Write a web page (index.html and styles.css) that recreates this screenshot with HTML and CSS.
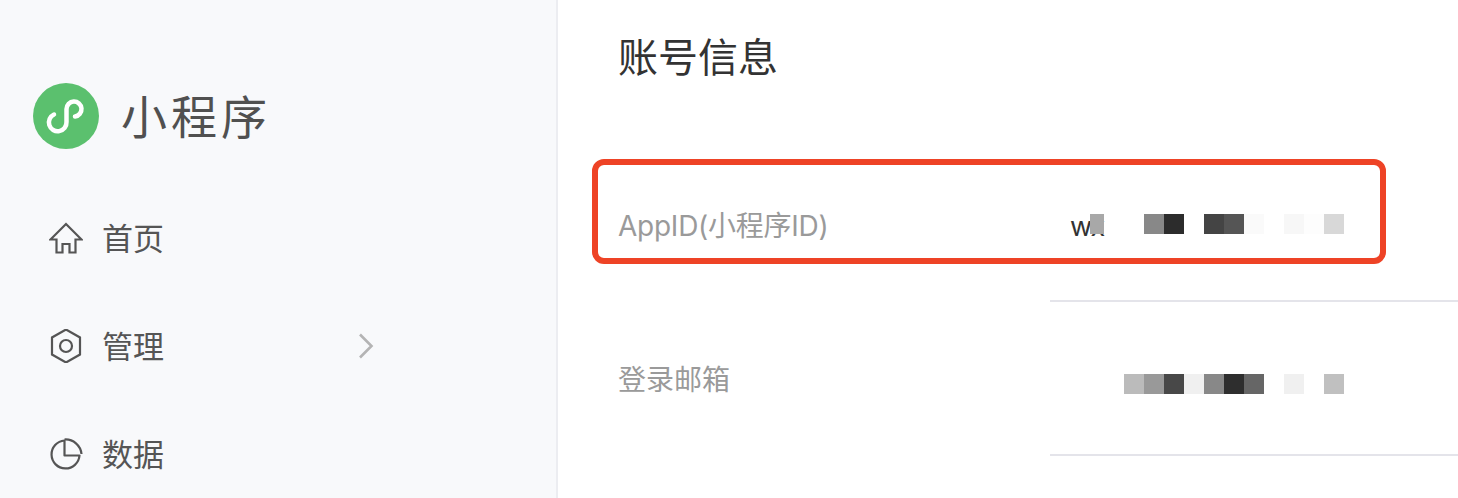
FILE: index.html
```html
<!DOCTYPE html>
<html lang="zh-CN">
<head>
  <meta charset="UTF-8" />
  <meta name="viewport" content="width=device-width, initial-scale=1.0"/>
  <title>账号信息</title>
  <link rel="stylesheet" href="styles.css">
</head>
<body>
  <div class="page">
    <aside class="sidebar">
      <div class="logo">
        <svg class="logo-mark" viewBox="0 0 66 66" width="66" height="66">
          <circle cx="33" cy="33" r="33" fill="#5bc06e"/>
          <path d="M42 33.500A7.500 7.500 0 1 0 33.500 26V39A8.800 8.800 0 1 1 21 31.500" fill="none" stroke="#fff" stroke-width="4.500" stroke-linecap="round"/>
        </svg>
        <span class="logo-text">小程序</span>
      </div>
      <nav class="nav">
        <a class="nav-item">
          <svg class="nav-icon" viewBox="0 0 34 34" width="34" height="34">
            <path d="M1.500 18.500L17 3L32.500 18.500H26.500V31.500H20.500V23H13.500V31.500H7.500V18.500Z" fill="none" stroke="#555" stroke-width="2.200" stroke-linejoin="miter"/>
          </svg>
          <span class="nav-label">首页</span>
        </a>
        <a class="nav-item">
          <svg class="nav-icon" viewBox="0 0 34 34" width="34" height="34">
            <path d="M17 0.500L31 8.500V25.500L17 33.500L3 25.500V8.500Z" fill="none" stroke="#555" stroke-width="2.200"/>
            <circle cx="17" cy="17" r="6" fill="none" stroke="#555" stroke-width="2.200"/>
          </svg>
          <span class="nav-label">管理</span>
          <svg class="nav-arrow" viewBox="0 0 16 26" width="16" height="26">
            <path d="M2 1.500L13.500 13L2 24.500" fill="none" stroke="#b4b4b4" stroke-width="2.600"/>
          </svg>
        </a>
        <a class="nav-item">
          <svg class="nav-icon" viewBox="0 0 34 34" width="34" height="34">
            <path d="M15.500 3.500A14 14 0 1 0 30.500 18.500H15.500Z" fill="none" stroke="#555" stroke-width="2.200" stroke-linejoin="round"/>
            <path d="M15.500 2.500A16 16 0 0 1 32.500 17" fill="none" stroke="#555" stroke-width="2.200"/>
          </svg>
          <span class="nav-label">数据</span>
        </a>
      </nav>
    </aside>

    <main class="main">
      <h1 class="title">账号信息</h1>

      <div class="info-row">
        <div class="info-label">AppID(小程序ID)</div>
        <div class="info-value info-value-first">
          <span class="appid-prefix">wx</span>
          <i class="tile tile-narrow s-a8"></i>
          <i class="tile gap"></i>
          <i class="tile gap"></i>
          <i class="tile s-88"></i>
          <i class="tile s-2c"></i>
          <i class="tile gap"></i>
          <i class="tile s-44"></i>
          <i class="tile s-55"></i>
          <i class="tile s-fa"></i>
          <i class="tile gap"></i>
          <i class="tile s-f7"></i>
          <i class="tile s-fd"></i>
          <i class="tile s-d8"></i>
        </div>
      </div>

      <div class="info-row">
        <div class="info-label info-label-second">登录邮箱</div>
        <div class="info-value info-value-second">
          <i class="tile s-bb"></i>
          <i class="tile s-99"></i>
          <i class="tile s-48"></i>
          <i class="tile s-f0"></i>
          <i class="tile s-88"></i>
          <i class="tile s-2e"></i>
          <i class="tile s-66"></i>
          <i class="tile gap"></i>
          <i class="tile s-f0"></i>
          <i class="tile gap"></i>
          <i class="tile s-c0"></i>
        </div>
      </div>

      <div class="highlight"></div>
    </main>
  </div>
</body>
</html>
```

FILE: styles.css
```css
html, body {
  margin: 0;
  height: 100%;
  overflow: hidden;
}

body {
  font-family: "Noto Sans CJK SC", "Inter", sans-serif;
  background-color: #ffffff;
  color: #333333;
}

.page {
  display: flex;
  height: 498px;
}

/* sidebar */
.sidebar {
  box-sizing: border-box;
  width: 558px;
  flex-shrink: 0;
  padding: 83px 0 0 33px;
  background-color: #f8f9fb;
  border-right: 2px solid #ecedf1;
}

.logo {
  display: flex;
  align-items: center;
  gap: 22px;
  height: 66px;
}

.logo-text {
  font-size: 46px;
  letter-spacing: 4px;
  color: #505050;
  padding-bottom: 4px;
}

.nav {
  margin-top: 35px;
  padding-left: 16px;
}

.nav-item {
  display: flex;
  align-items: center;
  gap: 19px;
  height: 108px;
  font-size: 31px;
  color: #555555;
}

.nav-label {
  padding-bottom: 4px;
}

.nav-arrow {
  margin-left: 175px;
}

/* main area */
.main {
  position: relative;
  flex: 1;
  padding: 27px 0 0 60px;
}

.title {
  margin: 0 0 65px;
  height: 56px;
  line-height: 56px;
  font-size: 40px;
  font-weight: 400;
  color: #333333;
}

.info-row {
  display: flex;
}

.info-label {
  width: 432px;
  padding-top: 58px;
  line-height: 40px;
  font-size: 28px;
  letter-spacing: -0.25px;
  font-family: "Inter", "Noto Sans CJK SC", sans-serif;
  color: #9a9a9a;
}

.info-label-second {
  font-family: "Noto Sans CJK SC", sans-serif;
  letter-spacing: 0;
  padding-top: 56px;
}

.info-value {
  box-sizing: border-box;
  flex: 1;
  height: 154px;
  display: flex;
  align-items: center;
  justify-content: flex-end;
  padding-right: 114px;
  border-bottom: 2px solid #e4e4ea;
}

.info-value-second {
  padding-top: 12px;
}

.appid-prefix {
  width: 20px;
  font-size: 27px;
  letter-spacing: -1.5px;
  font-family: "Inter", sans-serif;
  color: #333333;
  margin-top: 4px;
}

/* mosaic over the blurred ids */
.tile {
  display: block;
  width: 20px;
  height: 20px;
  position: relative;
}

.tile.gap {
  background: none;
}

.tile-narrow {
  width: 14px;
}

.s-a8 { background-color: #a8a8a8; }
.s-88 { background-color: #888888; }
.s-2c { background-color: #2c2c2c; }
.s-44 { background-color: #444444; }
.s-55 { background-color: #555555; }
.s-fa { background-color: #fafafa; }
.s-f7 { background-color: #f7f7f7; }
.s-fd { background-color: #fdfdfd; }
.s-d8 { background-color: #d8d8d8; }
.s-bb { background-color: #bbbbbb; }
.s-99 { background-color: #999999; }
.s-48 { background-color: #484848; }
.s-f0 { background-color: #f0f0f0; }
.s-2e { background-color: #2e2e2e; }
.s-66 { background-color: #666666; }
.s-c0 { background-color: #c0c0c0; }

/* red annotation drawn over the first row */
.highlight {
  position: absolute;
  left: 34px;
  top: 159px;
  width: 794px;
  height: 105px;
  box-sizing: border-box;
  border: 6px solid #ee4326;
  border-radius: 12px;
}
```
